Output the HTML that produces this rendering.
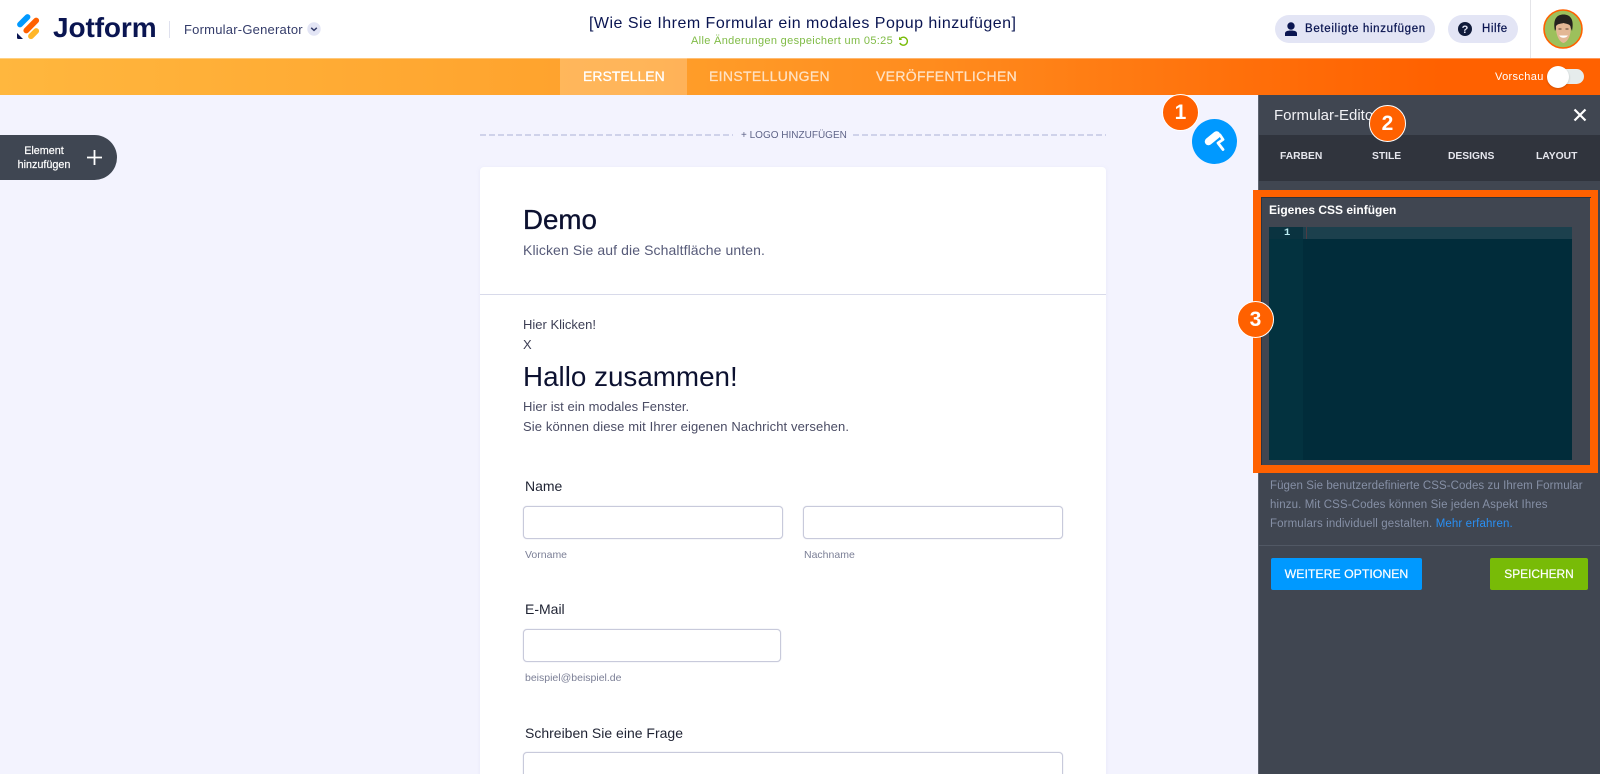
<!DOCTYPE html>
<html lang="de"><head><meta charset="utf-8"><title>Jotform Formular-Generator</title>
<style>
html,body{margin:0;padding:0;width:1600px;height:774px;overflow:hidden;background:#f3f3fe;font-family:"Liberation Sans",sans-serif}
#p{position:relative;width:1600px;height:774px;overflow:hidden}
#p div,#p span.t,#p svg{position:absolute}
.t{white-space:nowrap;line-height:1}
.inp{background:#fff;border:1px solid #c8cadb;border-radius:4px;box-sizing:border-box;box-shadow:0 0 1px #c8cadb}
.badge{width:35px;height:35px;border-radius:50%;background:#ff6100;border:1.5px solid #fff;color:#fff;font-weight:bold;font-size:21px;text-align:center;line-height:35px}
.dash{height:1.5px;background:repeating-linear-gradient(90deg,#cfd2ea 0 6px,transparent 6px 9px)}
</style></head><body><div id="p">

<!-- top bar -->
<div style="left:0;top:0;width:1600px;height:58px;background:#fff"></div>
<svg style="left:0;top:0" width="60" height="58" viewBox="0 0 60 58">
<path d="M20 24.500L27.500 17" stroke="#0099ff" stroke-width="5.800" stroke-linecap="round"/>
<path d="M26.300 30.500L36.200 20.500" stroke="#ff6100" stroke-width="5.800" stroke-linecap="round"/>
<path d="M31 36.200L36.200 31" stroke="#ffb629" stroke-width="5.800" stroke-linecap="round"/>
<path d="M17 33L23 39H18.200C17.500 39 17 38.500 17 37.800Z" fill="#0a1551"/>
</svg>
<span class="t" style="left:53px;top:14px;font-size:28px;font-weight:bold;color:#0a1551;letter-spacing:-.1px">Jotform</span>
<div style="left:169px;top:21px;width:1px;height:17px;background:#dfe1ee"></div>
<span class="t" style="left:184px;top:23px;font-size:13px;color:#343c6a;letter-spacing:.22px">Formular-Generator</span>
<svg style="left:307px;top:22px" width="14" height="14" viewBox="0 0 14 14"><circle cx="7" cy="7" r="6.700" fill="#e3e5f5"/><path d="M4.200 5.800L7 8.400L9.800 5.800" fill="none" stroke="#343c6a" stroke-width="1.500"/></svg>

<span class="t" style="left:589px;top:16px;font-size:16px;color:#0a1551;letter-spacing:.48px">[Wie Sie Ihrem Formular ein modales Popup hinzufügen]</span>
<span class="t" style="left:691px;top:36px;font-size:11px;color:#7fbb45;letter-spacing:.33px">Alle Änderungen gespeichert um 05:25</span>
<svg style="left:898px;top:36px" width="11" height="11" viewBox="0 0 11 11"><path d="M2.500 2.400A4 4 0 1 1 1.800 7" fill="none" stroke="#78bb07" stroke-width="1.400"/><path d="M1 .8V4H4.200Z" fill="#78bb07"/></svg>

<div style="left:1275px;top:15px;width:160px;height:28px;border-radius:14px;background:#e3e5f5"></div>
<svg style="left:1284px;top:22px" width="14" height="15" viewBox="0 0 14 15"><circle cx="7" cy="4" r="3.700" fill="#0a1551"/><path d="M1 14V11.500C1 9.500 3 8.500 7 8.500S13 9.500 13 11.500V14Z" fill="#0a1551"/></svg>
<span class="t" style="left:1305px;top:24px;font-size:11.500px;color:#0a1551;letter-spacing:.67px;-webkit-text-stroke:.25px #0a1551">Beteiligte hinzufügen</span>
<div style="left:1448px;top:15px;width:70px;height:28px;border-radius:14px;background:#e3e5f5"></div>
<svg style="left:1458px;top:22px" width="14" height="14" viewBox="0 0 14 14"><circle cx="7" cy="7" r="7" fill="#101b3a"/><text x="7" y="11" text-anchor="middle" font-family="Liberation Sans" font-weight="bold" font-size="11" fill="#e3e5f5">?</text></svg>
<span class="t" style="left:1482px;top:24px;font-size:11.500px;color:#0a1551;letter-spacing:.55px;-webkit-text-stroke:.25px #0a1551">Hilfe</span>
<div style="left:1530px;top:0;width:1px;height:58px;background:#e4e4e8"></div>
<svg style="left:1543px;top:9px" width="40" height="40" viewBox="0 0 40 40">
<circle cx="20" cy="20" r="19" fill="#9cc05c" stroke="#ff6100" stroke-width="1.600"/>
<path d="M12 22C9.500 10 14 5.500 20.500 5.500S31.500 10 29 22L27 17C24 14 18 14 15 16Z" fill="#26231f"/>
<path d="M13 17C15 14.500 17 15 20.500 14C24 15 26.500 15 27.500 17.500C28.500 25 25 33 20.500 34C16 33 12.500 25 13 17Z" fill="#e3b795"/>
<path d="M15.500 20H18.500M22.500 20H25.500" stroke="#5a4030" stroke-width="1.100"/>
<path d="M16 26.500C18 29.500 23 29.500 25 26.500Z" fill="#fff"/>
</svg>

<!-- orange bar -->
<div style="left:0;top:58px;width:1600px;height:37px;background:linear-gradient(90deg,#ffb73e 0%,#ffa02b 40%,#ff8c1e 58%,#ff6f0a 78%,#ff6100 90%)"></div>
<div style="left:0;top:58px;width:1600px;height:1px;background:rgba(255,255,255,.35)"></div>
<div style="left:560px;top:58px;width:127px;height:37px;background:rgba(255,255,255,.22)"></div>
<span class="t" style="left:583px;top:69px;font-size:14px;color:#fff;-webkit-text-stroke:.25px #fff">ERSTELLEN</span>
<span class="t" style="left:709px;top:69px;font-size:14px;color:#ffe2c4;letter-spacing:.33px;-webkit-text-stroke:.25px #ffe2c4">EINSTELLUNGEN</span>
<span class="t" style="left:876px;top:69px;font-size:14px;color:#ffe2c4;letter-spacing:.33px;-webkit-text-stroke:.25px #ffe2c4">VERÖFFENTLICHEN</span>
<span class="t" style="left:1495px;top:72px;font-size:11px;color:#fff;letter-spacing:.35px">Vorschau</span>
<div style="left:1555px;top:69px;width:29px;height:15px;border-radius:8px;background:#e6ecec"></div>
<div style="left:1547px;top:66px;width:22px;height:22px;border-radius:50%;background:#fff;box-shadow:0 1px 2px rgba(0,0,0,.2)"></div>

<!-- left button -->
<div style="left:0;top:135px;width:117px;height:45px;background:#3f4652;border-radius:0 23px 23px 0"></div>
<span class="t" style="left:8px;top:146px;width:72px;text-align:center;font-size:10.800px;color:#fff;-webkit-text-stroke:.2px #fff">Element</span>
<span class="t" style="left:8px;top:160px;width:72px;text-align:center;font-size:10.800px;color:#fff;-webkit-text-stroke:.2px #fff">hinzufügen</span>
<svg style="left:86px;top:149px" width="17" height="17" viewBox="0 0 17 17"><path d="M8.500 1V16M1 8.500H16" stroke="#fff" stroke-width="1.800"/></svg>

<!-- logo line -->
<div class="dash" style="left:480px;top:134px;width:253px"></div>
<div class="dash" style="left:853px;top:134px;width:253px"></div>
<span class="t" style="left:741px;top:131px;font-size:10px;color:#5f6488">+ LOGO HINZUFÜGEN</span>

<!-- form card -->
<div style="left:480px;top:167px;width:626px;height:620px;background:#fff;border-radius:4px 4px 0 0;box-shadow:0 1px 4px rgba(180,185,220,.18)"></div>
<div style="left:480px;top:294px;width:626px;height:1px;background:#d8daea"></div>
<span class="t" style="left:523px;top:206px;font-size:27.700px;color:#0c1130;-webkit-text-stroke:.35px #0c1130">Demo</span>
<span class="t" style="left:523px;top:243px;font-size:14px;color:#565a78;letter-spacing:.1px">Klicken Sie auf die Schaltfläche unten.</span>
<span class="t" style="left:523px;top:318px;font-size:13px;color:#3d3f55">Hier Klicken!</span>
<span class="t" style="left:523px;top:338px;font-size:13px;color:#3d3f55">X</span>
<span class="t" style="left:523px;top:363px;font-size:27.800px;color:#0c1130">Hallo zusammen!</span>
<span class="t" style="left:523px;top:400px;font-size:13px;color:#4a4c64;letter-spacing:.05px">Hier ist ein modales Fenster.</span>
<span class="t" style="left:523px;top:420px;font-size:13px;color:#4a4c64;letter-spacing:.11px">Sie können diese mit Ihrer eigenen Nachricht versehen.</span>

<span class="t" style="left:525px;top:479px;font-size:14px;color:#1f2333">Name</span>
<div class="inp" style="left:523px;top:506px;width:260px;height:33px"></div>
<div class="inp" style="left:803px;top:506px;width:260px;height:33px"></div>
<span class="t" style="left:525px;top:550px;font-size:10.500px;color:#7b7f96">Vorname</span>
<span class="t" style="left:804px;top:550px;font-size:10.500px;color:#7b7f96">Nachname</span>

<span class="t" style="left:525px;top:602px;font-size:14px;color:#1f2333">E-Mail</span>
<div class="inp" style="left:523px;top:629px;width:258px;height:33px"></div>
<span class="t" style="left:525px;top:673px;font-size:10.500px;color:#7b7f96">beispiel@beispiel.de</span>

<span class="t" style="left:525px;top:726px;font-size:14px;color:#1f2333">Schreiben Sie eine Frage</span>
<div class="inp" style="left:523px;top:752px;width:540px;height:60px"></div>

<!-- blue roller -->
<div style="left:1192px;top:119px;width:45px;height:45px;border-radius:50%;background:#0099ff"></div>
<svg style="left:1192px;top:118px" width="46" height="46" viewBox="0 0 46 46">
<path d="M16.500 23.500L24.500 17" stroke="#fff" stroke-width="7.500" stroke-linecap="round"/>
<path d="M28 17L31 21.500L26 25L31 31.500" fill="none" stroke="#fff" stroke-width="2.800" stroke-linecap="round" stroke-linejoin="round"/>
</svg>

<!-- right panel -->
<div style="left:1258px;top:95px;width:342px;height:679px;background:#404651;border-left:1px solid #5e6470;box-sizing:border-box"></div>
<span class="t" style="left:1274px;top:108px;font-size:15px;color:#f1f1f5">Formular-Editor</span>
<svg style="left:1573px;top:108px" width="14" height="14" viewBox="0 0 14 14"><path d="M1.500 1.500L12.500 12.500M12.500 1.500L1.500 12.500" stroke="#fff" stroke-width="2.200"/></svg>
<div style="left:1259px;top:135px;width:341px;height:46px;background:#30343d"></div>
<span class="t" style="left:1280px;top:152px;font-size:10.300px;font-weight:bold;color:#e6e7ee">FARBEN</span>
<span class="t" style="left:1372px;top:152px;font-size:10.300px;font-weight:bold;color:#e6e7ee">STILE</span>
<span class="t" style="left:1448px;top:152px;font-size:10.300px;font-weight:bold;color:#e6e7ee">DESIGNS</span>
<span class="t" style="left:1536px;top:152px;font-size:10.300px;font-weight:bold;color:#e6e7ee">LAYOUT</span>

<!-- highlight -->
<div style="left:1253px;top:190px;width:345px;height:283px;box-sizing:border-box;border:8px solid #ff6100;border-top-width:7px"></div>
<div style="left:1261px;top:197px;width:330px;height:268px;box-sizing:border-box;border:1px solid #2f333c;border-right:0;border-bottom:0"></div>
<span class="t" style="left:1269px;top:204px;font-size:12px;font-weight:bold;color:#fff">Eigenes CSS einfügen</span>
<div style="left:1269px;top:227px;width:303px;height:233px;background:#012c3a"></div>
<div style="left:1269px;top:227px;width:34px;height:233px;background:#03323f"></div>
<div style="left:1303px;top:227px;width:269px;height:12px;background:#1c404d"></div>
<div style="left:1269px;top:227px;width:34px;height:12px;background:#0a3340"></div>
<div style="left:1306px;top:227px;width:1px;height:12px;background:#4f3c44"></div>
<span class="t" style="left:1284px;top:228px;font-family:'Liberation Mono',monospace;font-size:10.500px;font-weight:bold;color:#bdeef5">1</span>

<span class="t" style="left:1270px;top:481px;font-size:11.500px;color:#8690a6;letter-spacing:.07px">Fügen Sie benutzerdefinierte CSS-Codes zu Ihrem Formular</span>
<span class="t" style="left:1270px;top:500px;font-size:11.500px;color:#8690a6;letter-spacing:.12px">hinzu. Mit CSS-Codes können Sie jeden Aspekt Ihres</span>
<span class="t" style="left:1270px;top:519px;font-size:11.500px;color:#8690a6;letter-spacing:.12px">Formulars individuell gestalten. <span style="color:#2a8ff2">Mehr erfahren.</span></span>
<div style="left:1259px;top:545px;width:341px;height:1px;background:#515864"></div>
<div style="left:1271px;top:558px;width:151px;height:32px;background:#0099ff;border-radius:2px"></div>
<span class="t" style="left:1271px;top:568px;width:151px;text-align:center;font-size:12.300px;color:#fff;-webkit-text-stroke:.2px #fff">WEITERE OPTIONEN</span>
<div style="left:1490px;top:558px;width:98px;height:32px;background:#78bb07;border-radius:2px"></div>
<span class="t" style="left:1490px;top:569px;width:98px;text-align:center;font-size:11.900px;color:#fff;-webkit-text-stroke:.2px #fff">SPEICHERN</span>

<!-- badges -->
<div class="badge" style="left:1162px;top:94px">1</div>
<div class="badge" style="left:1369px;top:105px">2</div>
<div class="badge" style="left:1237px;top:301px">3</div>
</div></body></html>
